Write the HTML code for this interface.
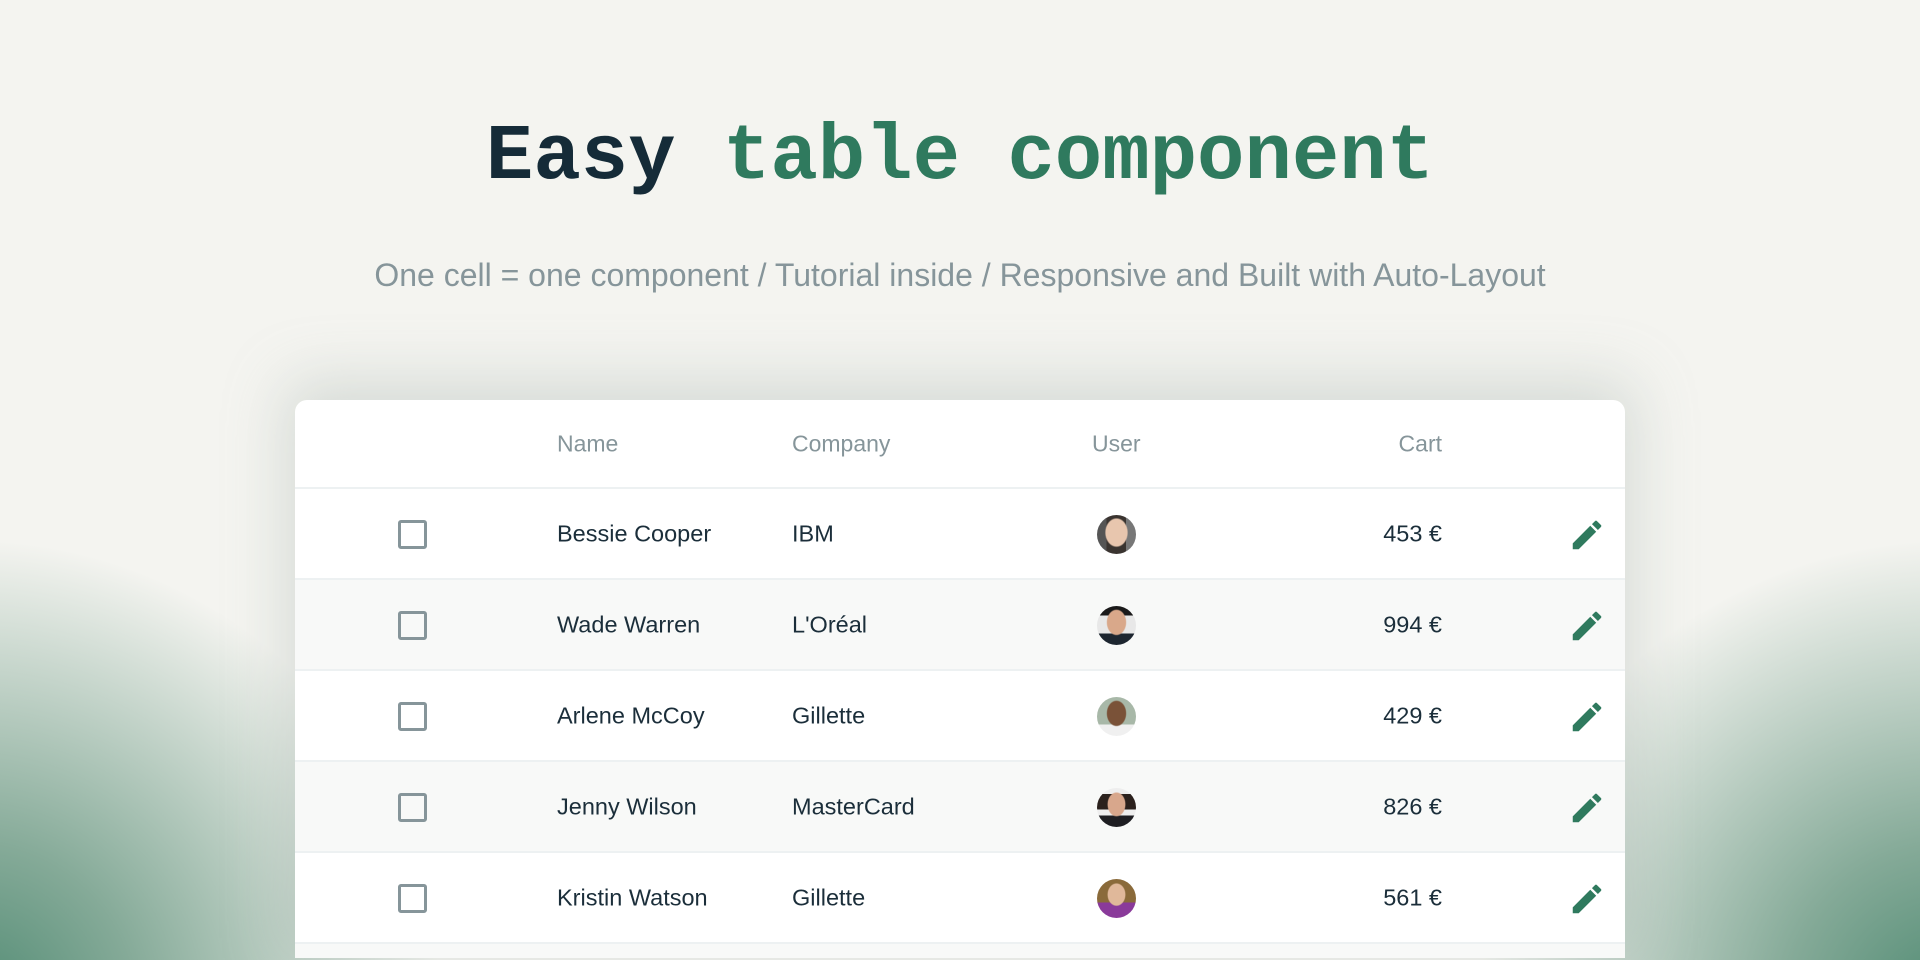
<!DOCTYPE html>
<html style="overflow:hidden;width:1920px;height:960px"><head><meta charset="utf-8"><style>
*{margin:0;padding:0;box-sizing:border-box}
body{width:1920px;height:960px;overflow:hidden;position:relative;font-family:"Liberation Sans",sans-serif;
background:
radial-gradient(ellipse 470px 470px at -30px 1010px,#4f8a72 0%,rgba(95,145,122,.75) 35%,rgba(244,244,240,0) 100%),
radial-gradient(ellipse 470px 470px at 1950px 1010px,#4f8a72 0%,rgba(95,145,122,.75) 35%,rgba(244,244,240,0) 100%),
#f4f4f0;}
h1{position:absolute;top:112px;left:0;width:1920px;text-align:center;font-family:"Liberation Mono",monospace;font-weight:bold;font-size:79px;color:#152b38}
h1 span{color:#2f7a5e}
.sub{position:absolute;top:257px;left:0;width:1920px;text-align:center;font-size:32px;color:#86959a}
.card{position:absolute;left:295px;top:400px;width:1330px;height:558px;background:#fff;border-radius:12px 12px 0 0;box-shadow:0 -10px 60px 10px rgba(160,175,170,.35);overflow:hidden}
.hd{position:absolute;top:0;left:0;width:100%;height:89px;border-bottom:2px solid #edf1f2;font-size:23px;color:#86959a}
.row{position:absolute;left:0;width:100%;height:91px;border-bottom:2px solid #edf1f2;font-size:23.5px;color:#1b2e3a}
.row.alt{background:#f8f9f8}
.c{position:absolute;top:50%;transform:translateY(-50%);white-space:nowrap}
.cb{position:absolute;left:103px;top:31px;width:29px;height:29px;border:3px solid #86959a;border-radius:3px}
.av{position:absolute;left:802px;top:26px;width:39px;height:39px;border-radius:50%}
.pen{position:absolute;left:1273px;top:27px;width:38px;height:38px}
</style></head><body>
<h1>Easy <span>table component</span></h1>
<div class="sub">One cell = one component / Tutorial inside / Responsive and Built with Auto-Layout</div>
<div class="card">
<div class="hd">
<div class="c" style="left:262px">Name</div>
<div class="c" style="left:497px">Company</div>
<div class="c" style="left:797px">User</div>
<div class="c" style="right:183px">Cart</div>
</div>
<div class="row" style="top:89px"><div class="cb"></div><div class="c" style="left:262px">Bessie Cooper</div><div class="c" style="left:497px">IBM</div><div class="av" style="background:radial-gradient(ellipse 30% 38% at 50% 45%,#e8c6ae 0 90%,transparent 100%),linear-gradient(90deg,#555 0 25%,#3a3430 25% 75%,#777 75%)"></div><div class="c" style="right:183px">453 €</div><svg class="pen" viewBox="0 0 24 24"><path fill="#2f7a5e" d="M3 17.25V21h3.75L17.81 9.94l-3.75-3.75L3 17.25zM20.71 7.04a1 1 0 000-1.41l-2.34-2.34a1 1 0 00-1.410 0l-1.83 1.83 3.75 3.75 1.83-1.83z"/></svg></div>
<div class="row alt" style="top:180px"><div class="cb"></div><div class="c" style="left:262px">Wade Warren</div><div class="c" style="left:497px">L'Oréal</div><div class="av" style="background:radial-gradient(ellipse 26% 34% at 50% 42%,#d9a88a 0 90%,transparent 100%),linear-gradient(180deg,#1a1a1a 0 25%,#e8e8e8 25% 70%,#1d2630 70%)"></div><div class="c" style="right:183px">994 €</div><svg class="pen" viewBox="0 0 24 24"><path fill="#2f7a5e" d="M3 17.25V21h3.75L17.81 9.94l-3.75-3.75L3 17.25zM20.71 7.04a1 1 0 000-1.41l-2.34-2.34a1 1 0 00-1.41 0l-1.83 1.83 3.75 3.75 1.83-1.83z"/></svg></div>
<div class="row" style="top:271px"><div class="cb"></div><div class="c" style="left:262px">Arlene McCoy</div><div class="c" style="left:497px">Gillette</div><div class="av" style="background:radial-gradient(ellipse 26% 34% at 50% 42%,#7a5238 0 90%,transparent 100%),linear-gradient(180deg,#a8b8a8 0 70%,#f0f0f0 70%)"></div><div class="c" style="right:183px">429 €</div><svg class="pen" viewBox="0 0 24 24"><path fill="#2f7a5e" d="M3 17.25V21h3.75L17.81 9.94l-3.75-3.75L3 17.25zM20.71 7.04a1 1 0 000-1.41l-2.34-2.34a1 1 0 00-1.41 0l-1.83 1.83 3.75 3.75 1.83-1.83z"/></svg></div>
<div class="row alt" style="top:362px"><div class="cb"></div><div class="c" style="left:262px">Jenny Wilson</div><div class="c" style="left:497px">MasterCard</div><div class="av" style="background:radial-gradient(ellipse 24% 32% at 50% 42%,#d8a78c 0 90%,transparent 100%),linear-gradient(180deg,#eee 0 15%,#2b211d 15% 55%,#eee 55% 70%,#1e1e22 70%)"></div><div class="c" style="right:183px">826 €</div><svg class="pen" viewBox="0 0 24 24"><path fill="#2f7a5e" d="M3 17.25V21h3.75L17.81 9.94l-3.75-3.75L3 17.25zM20.71 7.04a1 1 0 000-1.41l-2.34-2.34a1 1 0 00-1.41 0l-1.83 1.83 3.75 3.75 1.83-1.83z"/></svg></div>
<div class="row" style="top:453px"><div class="cb"></div><div class="c" style="left:262px">Kristin Watson</div><div class="c" style="left:497px">Gillette</div><div class="av" style="background:radial-gradient(ellipse 24% 30% at 50% 40%,#e0b89a 0 90%,transparent 100%),linear-gradient(180deg,#8a6a3a 0 60%,#8a3a9a 60%)"></div><div class="c" style="right:183px">561 €</div><svg class="pen" viewBox="0 0 24 24"><path fill="#2f7a5e" d="M3 17.25V21h3.75L17.81 9.94l-3.75-3.75L3 17.25zM20.71 7.04a1 1 0 000-1.41l-2.34-2.34a1 1 0 00-1.41 0l-1.83 1.83 3.75 3.75 1.83-1.83z"/></svg></div>
<div class="row alt" style="top:544px"></div>
</div>
</body></html>
